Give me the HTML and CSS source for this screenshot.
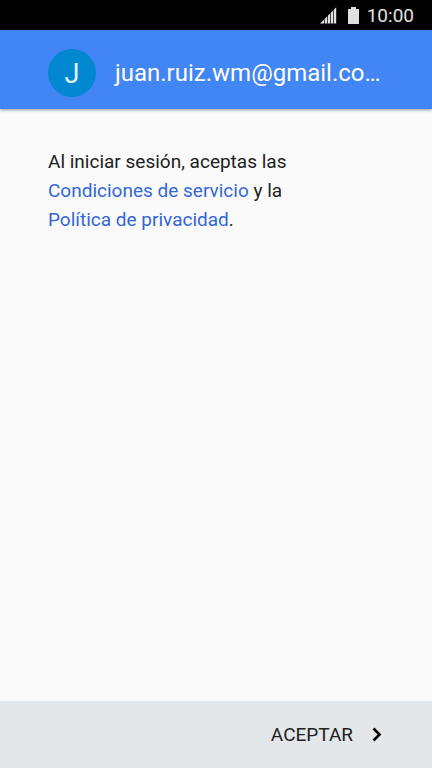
FILE: index.html
```html
<!DOCTYPE html>
<html lang="es">
<head>
<meta charset="utf-8">
<meta name="viewport" content="width=device-width, initial-scale=1">
<title>Condiciones de servicio</title>
<link rel="stylesheet" href="styles.css">
</head>
<body>
<div class="status">
  <svg class="signal" width="17" height="17" viewBox="0 0 17 17" aria-hidden="true">
    <path d="M0 16.500L4 12.500V16.500zM4.700 16.500V11.800L7.300 9.200V16.500zM8 16.500V8.500L10.300 6.200V16.500zM11 16.500V5.500L13 3.500V16.500zM13.700 16.500V2.800L16.200.300V16.500z"/>
  </svg>
  <svg class="battery" width="11" height="17" viewBox="0 0 11 17" aria-hidden="true">
    <path d="M0 2h3V0h5v2h3v15H0z"/>
  </svg>
  <time class="clock">10:00</time>
</div>
<header class="account">
  <span class="avatar" aria-hidden="true">J</span>
  <h1 class="email">juan.ruiz.wm@gmail.com</h1>
</header>
<main class="content">
  <p class="terms">Al iniciar sesión, aceptas las <a href="#condiciones">Condiciones de servicio</a> y la <a href="#privacidad">Política de privacidad</a>.</p>
</main>
<footer class="actions">
  <button class="accept" type="button">
    ACEPTAR
    <svg width="12" height="16" viewBox="0 0 12 16" aria-hidden="true">
      <path d="M1.500 1.500L7.500 7.500L1.500 13.500" fill="none" stroke="#000" stroke-width="2.600"/>
    </svg>
  </button>
</footer>
</body>
</html>
```

FILE: styles.css
```css
* {
  box-sizing: border-box;
}

body {
  margin: 0;
  min-height: 100vh;
  display: flex;
  flex-direction: column;
  background: #fafafa;
  color: #212121;
  font-family: Roboto, "Liberation Sans", sans-serif;
  font-size: 19px;
}

.status {
  height: 30px;
  padding: 1px 18px 0;
  display: flex;
  align-items: center;
  justify-content: flex-end;
  background: #000;
  color: #e0e0e0;
}

.status svg {
  fill: #e0e0e0;
}

.signal {
  margin-right: 11px;
}

.battery {
  margin-right: 8px;
}

.clock {
  line-height: 28px;
}

.account {
  display: flex;
  align-items: center;
  gap: 16px;
  padding: 19px 48px 12px;
  background: #4285f4;
  box-shadow: 0 1px 3px rgba(0, 0, 0, 0.4);
  color: #fff;
}

.avatar {
  flex: none;
  width: 48px;
  height: 48px;
  border-radius: 50%;
  background: #0288d1;
  color: #e1f5fe;
  font-size: 27px;
  line-height: 50px;
  text-align: center;
}

.email {
  flex: 1;
  min-width: 0;
  margin: 0;
  padding-left: 3px;
  overflow: hidden;
  font-size: 24px;
  font-weight: 400;
  line-height: 34px;
  text-overflow: ellipsis;
  white-space: nowrap;
}

.content {
  flex: 1;
  padding: 38px 48px;
}

.terms {
  max-width: 280px;
  margin: 0;
  line-height: 29px;
}

.terms a {
  color: #3367d6;
  text-decoration: none;
}

.actions {
  display: flex;
  justify-content: flex-end;
  height: 67px;
  padding: 0 48px;
  background: #e3e7ea;
}

.accept {
  display: flex;
  align-items: center;
  gap: 19px;
  padding: 0;
  border: 0;
  background: none;
  color: #212121;
  font: inherit;
  cursor: pointer;
}
```
